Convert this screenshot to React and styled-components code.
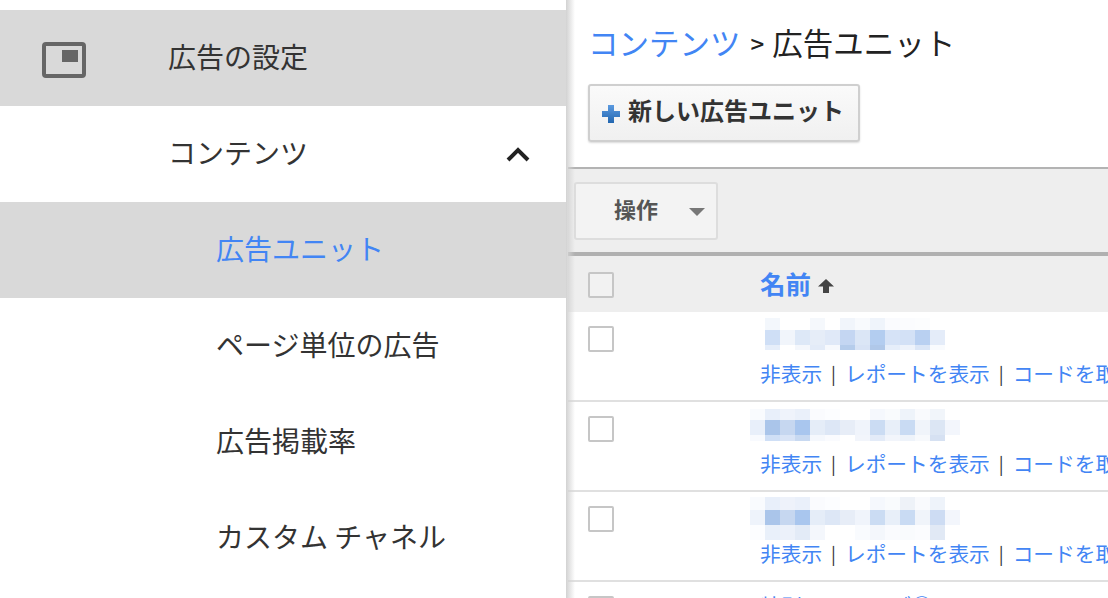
import React from 'react';
import styled, { createGlobalStyle } from 'styled-components';

const Global = createGlobalStyle`
    html, body {
        margin: 0;
        height: 100%;
        overflow: hidden;
        background: #fff;
    }
    body {
        font-family: "Noto Sans CJK JP", "Noto Sans", sans-serif;
        color: #333;
    }
`;

const Page = styled.div`
    display: flex;
    width: 1108px;
    height: 598px;
    overflow: hidden;
`;

const Sidebar = styled.nav`
    flex: 0 0 566px;
    padding-top: 10px;
    background: #fff;
`;

const NavRow = styled.div`
    display: flex;
    align-items: center;
    height: 96px;
    padding-left: ${props => props.$indent}px;
    padding-right: 35px;
    font-size: 28px;
    color: ${props => props.$active ? '#4285f4' : '#333'};
    background: ${props => props.$shaded ? '#d9d9d9' : '#fff'};
`;

const NavIcon = styled.svg`
    flex: 0 0 44px;
    margin-left: -126px;
    margin-right: 82px;
    margin-top: 4px;
`;

const NavLabel = styled.span`
    flex: 1;
    margin-bottom: 4px;
    white-space: nowrap;
`;

const Main = styled.main`
    flex: 1;
    position: relative;
    min-width: 0;
    padding-left: 2px;
    &::before {
        content: '';
        position: absolute;
        top: 0;
        bottom: 0;
        left: 0;
        width: 9px;
        background: linear-gradient(to right, #d2d2d2, rgba(220, 220, 220, 0));
        z-index: 2;
    }
`;

const Breadcrumb = styled.div`
    display: flex;
    align-items: center;
    height: 84px;
    padding-left: 20px;
    font-size: 30.5px;
    color: #222;
    white-space: nowrap;
`;

const CrumbLink = styled.span`
    color: #4285f4;
`;

const CrumbSep = styled.span`
    font-size: 24px;
    font-weight: 500;
    margin: 0 8px 0 10px;
`;

const NewBar = styled.div`
    height: 83px;
    padding-left: 20px;
`;

const NewButton = styled.button`
    display: flex;
    align-items: center;
    gap: 8px;
    width: 272px;
    height: 58px;
    padding: 0 0 0 12px;
    border: 2px solid #cfcfcf;
    border-radius: 3px;
    background: linear-gradient(#fafafa, #f0f0f0);
    box-shadow: 0 1px 2px rgba(0, 0, 0, 0.15);
    font: bold 24px "Noto Sans CJK JP", sans-serif;
    color: #333;
    white-space: nowrap;
`;

const ButtonLabel = styled.span`
    margin-bottom: 8px;
`;

const PlusIcon = styled.svg`
    flex: 0 0 18px;
    margin-top: 1px;
`;

const Toolbar = styled.div`
    display: flex;
    align-items: center;
    height: 83px;
    padding-left: 6px;
    background: #eee;
    border-top: 2px solid #b3b3b3;
    border-bottom: 4px solid #b0b0b0;
    box-sizing: content-box;
`;

const ActionSelect = styled.div`
    display: flex;
    align-items: center;
    justify-content: space-between;
    box-sizing: border-box;
    width: 144px;
    height: 58px;
    padding: 0 11px 0 38px;
    border: 2px solid #ddd;
    border-radius: 3px;
    background: #f3f3f3;
    font-size: 22px;
    font-weight: 700;
    color: #555;
`;

const ActionLabel = styled.span`
    margin-bottom: 6px;
`;

const Caret = styled.span`
    width: 0;
    height: 0;
    margin-top: 3px;
    border-left: 8px solid transparent;
    border-right: 8px solid transparent;
    border-top: 8px solid #777;
`;

const TableHead = styled.div`
    display: flex;
    height: 56px;
    background: #eee;
`;

const CheckCell = styled.div`
    flex: 0 0 172px;
    padding: ${props => props.$top}px 0 0 20px;
`;

const Check = styled.div`
    box-sizing: border-box;
    width: 26px;
    height: 26px;
    border: 2px solid #c6c6c6;
    border-radius: 2px;
    background: ${props => props.$head ? '#f2f2f2' : '#fff'};
`;

const NameHead = styled.div`
    display: flex;
    align-items: center;
    gap: 7px;
    font-size: 25.5px;
    font-weight: 700;
    color: #4285f4;
`;

const NameLabel = styled.span`
    margin-bottom: 4px;
`;

const SortArrow = styled.svg`
    margin-top: 4px;
`;

const Row = styled.div`
    display: flex;
    height: 88px;
    border-bottom: 2px solid #e0e0e0;
`;

const NameCell = styled.div`
    min-width: 0;
    white-space: nowrap;
`;

const Mosaic = styled.svg`
    display: block;
    margin-left: ${props => props.$left}px;
    margin-top: ${props => props.$top}px;
`;

const Actions = styled.div`
    display: flex;
    align-items: center;
    height: 30px;
    margin-top: ${props => props.$gap}px;
    font-size: 20.7px;
    color: #4285f4;
`;

const Pipe = styled.span`
    margin: 0 9px;
    color: #333;
    font-size: 18px;
`;

const LastRowName = styled.div`
    margin-top: 8px;
    font-size: 21px;
    color: #4285f4;
    white-space: nowrap;
`;

function paint(hex) {
    return hex.length === 3 ? '#' + hex + hex : '#' + hex;
}

function MosaicBlock({ rows, left, top }) {
    const width = rows[0].cells.length * 15;
    const height = rows.reduce((sum, r) => sum + r.h, 0);
    let y = 0;
    return (
        <Mosaic $left={left} $top={top} width={width} height={height} shapeRendering="crispEdges">
            {rows.map((r, i) => {
                const cells = r.cells.map((c, j) => (
                    <rect key={j} x={j * 15} y={y} width="15" height={r.h} fill={paint(c)} />
                ));
                y += r.h;
                return <g key={i}>{cells}</g>;
            })}
        </Mosaic>
    );
}

const blockOne = [
    { h: 12, cells: ['f3f7fc', 'fff', 'fff', 'f5f8fc', 'fff', 'f1f5fb', 'f8fafd', 'eff4fb', 'fafbfe', 'fbfcfe', 'fcfdfe', 'fff'] },
    { h: 15, cells: ['cfdff6', 'f1f5fb', 'dde8f7', 'e6edf8', 'e0e9f8', 'c4d6f2', 'dbe6f6', 'b3cdf0', 'd6e3f7', 'd3e1f6', 'b9d0f1', 'e4ecf9'] },
    { h: 5, cells: ['e6eefa', 'fff', 'f4f7fc', 'e3ebf8', 'f7f9fd', 'b5cceb', 'd8e3f5', 'b0c8e9', 'e6eefa', 'eef3fb', 'dbe6f7', 'f9fbfe'] },
];

const blockTwo = [
    { h: 11, cells: ['f9fbfe', 'e8effa', 'eff3fb', 'eaf0fa', 'fafbfe', 'fcfdff', 'fff', 'fff', 'f5f8fd', 'f9fbfd', 'eef3fa', 'f9fafd', 'f1f5fa', 'fff'] },
    { h: 15, cells: ['e8effa', 'aac5ea', 'c6d7f0', 'a9c6ee', 'e5edf8', 'dde7f6', 'e7edf7', 'f0f4fb', 'cbdcf3', 'e8eff9', 'c9dbf3', 'f0f4fa', 'dce6f4', 'f3f6fc'] },
    { h: 6, cells: ['f8fafe', 'cfdff6', 'd9e4f6', 'c8d9f1', 'f5f8fd', 'fafbfe', 'fff', 'f2f5fb', 'e3ebf8', 'f2f5fb', 'eef3fa', 'f7f9fc', 'd6e1f2', 'fff'] },
];

const blockThree = [
    { h: 13, cells: ['f9fbfe', 'e8effa', 'eef2fa', 'eaf0fa', 'fafbfe', 'fcfdff', 'fff', 'fff', 'f5f8fd', 'f9fbfd', 'eef2f8', 'f9fafd', 'eef3fa', 'fff'] },
    { h: 15, cells: ['eef3fb', 'aac5ea', 'c6d7f0', 'a9c6ee', 'e5edf8', 'dde7f6', 'e7edf7', 'f0f4fb', 'cbdcf3', 'e8eff9', 'c9dbf3', 'f0f4fa', 'cddcf3', 'f3f6fc'] },
    { h: 15, cells: ['fcfdff', 'e9f0fa', 'ecf1fa', 'e3ebf7', 'f4f7fc', 'fff', 'fff', 'f9fbfe', 'f4f7fc', 'fafbfe', 'f9fbfd', 'fbfcfe', 'e1e9f5', 'fff'] },
];

const rows = [
    { blocks: blockOne, left: 5, top: 6, gap: 8 },
    { blocks: blockTwo, left: -10, top: 7, gap: 7 },
    { blocks: blockThree, left: -10, top: 5, gap: -2 },
];

export default function App() {
    return (
        <Page>
            <Global />
            <Sidebar>
                <NavRow $indent={168} $shaded>
                    <NavIcon width="44" height="36" viewBox="0 0 44 36">
                        <rect x="2" y="2" width="40" height="32" rx="2" fill="none" stroke="#666" strokeWidth="4" />
                        <rect x="20" y="8" width="16" height="12" fill="#666" />
                    </NavIcon>
                    <NavLabel>広告の設定</NavLabel>
                </NavRow>
                <NavRow $indent={168}>
                    <NavLabel>コンテンツ</NavLabel>
                    <svg width="26" height="18" viewBox="0 0 26 18">
                        <path d="M3 15 L13 5 L23 15" fill="none" stroke="#222" strokeWidth="4" />
                    </svg>
                </NavRow>
                <NavRow $indent={216} $shaded $active>
                    <NavLabel>広告ユニット</NavLabel>
                </NavRow>
                <NavRow $indent={216}>
                    <NavLabel>ページ単位の広告</NavLabel>
                </NavRow>
                <NavRow $indent={216}>
                    <NavLabel>広告掲載率</NavLabel>
                </NavRow>
                <NavRow $indent={216}>
                    <NavLabel>カスタム チャネル</NavLabel>
                </NavRow>
            </Sidebar>
            <Main>
                <Breadcrumb>
                    <CrumbLink>コンテンツ</CrumbLink>
                    <CrumbSep>&gt;</CrumbSep>
                    広告ユニット
                </Breadcrumb>
                <NewBar>
                    <NewButton>
                        <PlusIcon width="18" height="18" viewBox="0 0 18 18">
                            <defs>
                                <linearGradient id="plusFill" x1="0" y1="0" x2="0" y2="1">
                                    <stop offset="0" stopColor="#5b9ae0" />
                                    <stop offset="1" stopColor="#2367b0" />
                                </linearGradient>
                            </defs>
                            <path d="M6 0 H12 V6 H18 V12 H12 V18 H6 V12 H0 V6 H6 Z" fill="url(#plusFill)" />
                        </PlusIcon>
                        <ButtonLabel>新しい広告ユニット</ButtonLabel>
                    </NewButton>
                </NewBar>
                <Toolbar>
                    <ActionSelect>
                        <ActionLabel>操作</ActionLabel>
                        <Caret />
                    </ActionSelect>
                </Toolbar>
                <TableHead>
                    <CheckCell $top={16}>
                        <Check $head />
                    </CheckCell>
                    <NameHead>
                        <NameLabel>名前</NameLabel>
                        <SortArrow width="16" height="16" viewBox="0 0 16 16">
                            <path d="M8 1 L16 8.5 H11 V15 H5 V8.5 H0 Z" fill="#444" />
                        </SortArrow>
                    </NameHead>
                </TableHead>
                {rows.map((r, i) => (
                    <Row key={i}>
                        <CheckCell $top={14}>
                            <Check />
                        </CheckCell>
                        <NameCell>
                            <MosaicBlock rows={r.blocks} left={r.left} top={r.top} />
                            <Actions $gap={r.gap}>
                                <span>非表示</span>
                                <Pipe>|</Pipe>
                                <span>レポートを表示</span>
                                <Pipe>|</Pipe>
                                <span>コードを取得</span>
                            </Actions>
                        </NameCell>
                    </Row>
                ))}
                <Row>
                    <CheckCell $top={14}>
                        <Check />
                    </CheckCell>
                    <LastRowName>特別ページ 用ブ①</LastRowName>
                </Row>
            </Main>
        </Page>
    );
}
